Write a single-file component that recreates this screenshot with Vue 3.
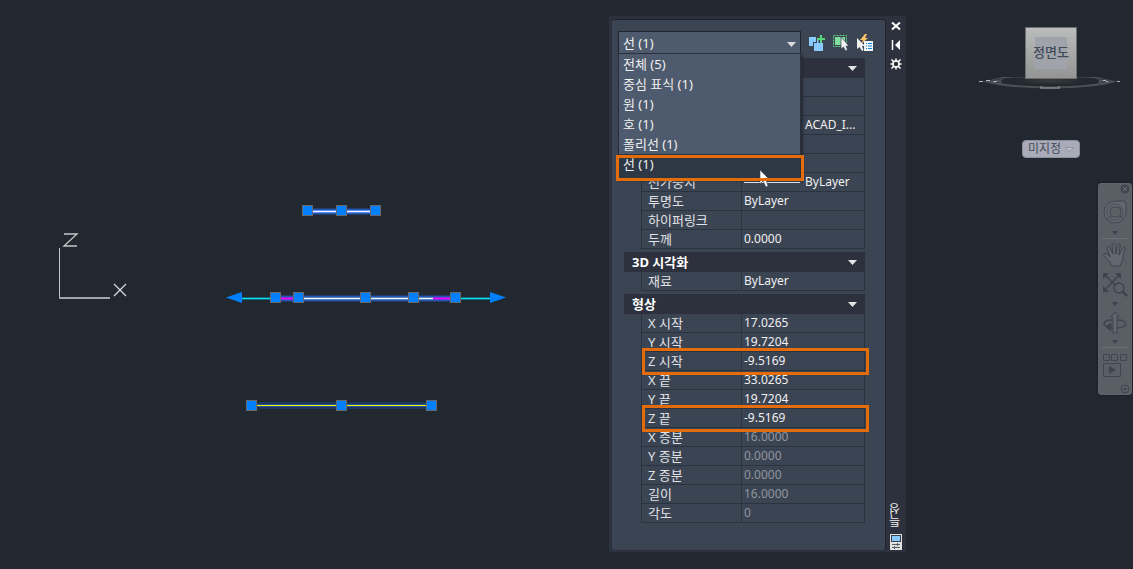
<script setup>
import { ref } from 'vue'

const options = ['전체 (5)', '중심 표식 (1)', '원 (1)', '호 (1)', '폴리선 (1)', '선 (1)']
const selected = ref('선 (1)')

const sections = [
  {
    title: '',
    rows: [
      { label: '', value: '' },
      { label: '', value: '' },
      { label: '', value: 'ACAD_I...', indent: true },
      { label: '', value: '' },
      { label: '', value: '' },
      { label: '선가중치', value: 'ByLayer', line: true },
      { label: '투명도', value: 'ByLayer' },
      { label: '하이퍼링크', value: '' },
      { label: '두께', value: '0.0000' }
    ]
  },
  { title: '3D 시각화', rows: [{ label: '재료', value: 'ByLayer' }] },
  {
    title: '형상',
    rows: [
      { label: 'X 시작', value: '17.0265' },
      { label: 'Y 시작', value: '19.7204' },
      { label: 'Z 시작', value: '-9.5169', marked: true },
      { label: 'X 끝', value: '33.0265' },
      { label: 'Y 끝', value: '19.7204' },
      { label: 'Z 끝', value: '-9.5169', marked: true },
      { label: 'X 증분', value: '16.0000', dim: true },
      { label: 'Y 증분', value: '0.0000', dim: true },
      { label: 'Z 증분', value: '0.0000', dim: true },
      { label: '길이', value: '16.0000', dim: true },
      { label: '각도', value: '0', dim: true }
    ]
  }
]

const grips = [
  [307, 210], [341, 210], [375, 210],
  [275, 297], [298, 297], [365, 297], [413, 297], [455, 297],
  [251, 405], [341, 405], [431, 405]
]
</script>

<template>
  <main class="workspace">
    <svg class="drawing" viewBox="0 0 609 569" preserveAspectRatio="xMinYMin meet" aria-label="도면">
      <g fill="none">
        <path d="M59.5 298V248" stroke="#c4c6c8" />
        <path d="M59 298H110" stroke="#a3a5a8" stroke-width="2" />
        <path d="M64 234H77L64 246H77" stroke="#c6c8ca" stroke-width="1.3" />
        <path d="M114 284L126 296M126 284L114 296" stroke="#d8dadc" stroke-width="1.3" />
      </g>
      <g fill="none">
        <path d="M307 211.500H375M276 298.500H456" stroke="#234f9e" stroke-width="7" opacity=".55" />
        <path d="M307 211.500H375M276 298.500H456" stroke="#2b6cf0" stroke-width="4" />
        <path d="M240 298.500H492" stroke="#1b4f7a" stroke-width="3" opacity=".5" />
        <path d="M240 298.500H276M456 298.500H492" stroke="#00e8ee" stroke-width="1.3" />
        <path d="M307 211.500H375M298 298.500H433" stroke="#f4f6ff" stroke-width="1.3" />
        <path d="M276 298.500H298M433 298.500H456" stroke="#f000ff" stroke-width="2" />
        <path d="M251 405.500H431" stroke="#20375d" stroke-width="7" />
        <path d="M251 405.500H431" stroke="#24549c" stroke-width="3" />
        <path d="M251 405.500H431" stroke="#f4f000" />
      </g>
      <path d="M226 297.500L242 292V303ZM506 297.500L490 292V303Z" fill="#0080ff" />
      <rect v-for="(g, i) in grips" :key="i" :x="g[0] - 4.500" :y="g[1] - 4.500" width="10" height="10" fill="#0080ff" stroke="#66686b" />
    </svg>

    <section class="palette" aria-label="특성">
      <div class="panel">
        <div class="picker">
          <div class="combo">
            <select v-model="selected" aria-label="객체 유형">
              <option v-for="o in options" :key="o">{{ o }}</option>
            </select>
            <svg class="combo-arrow" width="9" height="5" viewBox="0 0 9 5"><path d="M0 0H9L4.500 5Z" fill="#dcdcdc" /></svg>
            <ul class="menu" role="listbox" aria-label="객체 유형 목록">
              <li v-for="o in options" :key="o" role="option" :aria-selected="o === selected" :class="{ active: o === selected }" @click="selected = o">{{ o }}</li>
            </ul>
            <svg class="cursor" width="12" height="17" viewBox="0 0 12 17"><path d="M1 0V14L4 11L7 17L9 16L7 10H11Z" fill="#fff" stroke="#3b4453" stroke-width=".6" /></svg>
            <span class="choice-mark"></span>
          </div>
          <button class="tool" aria-label="추가 선택">
            <svg width="18" height="18" viewBox="0 0 18 18"><path d="M1 3H8V12H1Z" fill="#8acbff" /><path d="M5 8H15V17H5Z" fill="#3b4453" /><path d="M6 9H9V6H11V9H15V17H6Z" fill="#8acbff" /><path d="M8 4H17M12.500 0V9" stroke="#3b4453" stroke-width="4" /><path d="M9 5H17M13 1V9" stroke="#58d67c" stroke-width="2" /></svg>
          </button>
          <button class="tool" aria-label="객체 선택">
            <svg width="18" height="18" viewBox="0 0 18 18"><rect x="1.500" y="1.500" width="13" height="11" fill="none" stroke="#5fd885" stroke-dasharray="2 1" /><path d="M3 3H13V11H3Z" fill="#83dca0" /><path d="M9 3V15L11.500 13L13.500 17L15.500 16L14 12H17Z" fill="#f2f2f2" stroke="#3b4453" stroke-width=".7" /></svg>
          </button>
          <button class="tool" aria-label="신속 선택">
            <svg width="18" height="18" viewBox="0 0 18 18"><path d="M9 0L4 6H7L5 10L12 4H9L11 0Z" fill="#ffc565" /><path d="M1 4V15L3.500 13L6 17L7.500 16L6 12H9Z" fill="#f2f2f2" /><path d="M8 7H17V17H8Z" fill="#f2f4f7" /><path d="M10 9.500H11M12 9.500H16M10 12H11M12 12H16M10 14.500H11M12 14.500H16" stroke="#1687dc" stroke-width="1.200" /></svg>
          </button>
        </div>

        <div class="groups">
          <section v-for="(s, i) in sections" :key="i" class="group">
            <button class="group-head" :aria-label="s.title || '일반'">
              <span>{{ s.title }}</span>
              <svg width="9" height="5" viewBox="0 0 9 5"><path d="M0 0H9L4.500 5Z" fill="#e4e4e4" /></svg>
            </button>
            <table>
              <tbody>
                <tr v-for="(r, k) in s.rows" :key="k" :class="{ dim: r.dim }">
                  <th scope="row">{{ r.label }}</th>
                  <td>
                    <div class="value" :class="{ indent: r.indent }"><i v-if="r.line" class="sample"></i>{{ r.value }}</div>
                    <span v-if="r.marked" class="mark"></span>
                  </td>
                </tr>
              </tbody>
            </table>
          </section>
        </div>
      </div>

      <div class="strip">
        <button aria-label="닫기"><svg width="12" height="12" viewBox="0 0 12 12"><path d="M2 2.500L10 9.500M10 2.500L2 9.500" stroke="#fff" stroke-width="2" /></svg></button>
        <button aria-label="자동 숨기기"><svg width="12" height="12" viewBox="0 0 12 12"><path d="M2.500 1V11" stroke="#fff" stroke-width="1.500" /><path d="M9 2V10L5 6Z" fill="#fff" /><path d="M9.500 1.500V10.500" stroke="#fff" /></svg></button>
        <button aria-label="설정"><svg width="12" height="12" viewBox="0 0 12 12"><circle cx="6" cy="6" r="3" fill="none" stroke="#fff" stroke-width="1.500" /><path d="M6 0.500V3M6 9V11.500M0.500 6H3M9 6H11.500M1.500 1.500L4 4M8 8L10.500 10.500M10.500 1.500L8 4M4 8L1.500 10.500" stroke="#fff" stroke-width="1.500" /></svg></button>
        <span class="strip-title">특성</span>
        <svg width="12" height="16" viewBox="0 0 12 16"><path d="M0 0H12V16H0Z" fill="#e2e2e2" /><rect x="1.500" y="1.500" width="9" height="6" fill="#86c9ff" stroke="#3a414c" /><path d="M2 10.500H10M2 13.500H10M7.500 9V12M4.500 12V15" stroke="#555b64" /></svg>
      </div>
    </section>

    <aside class="view">
      <svg class="cube" width="142" height="64" viewBox="0 0 142 64" role="img" aria-label="정면도">
        <defs>
          <linearGradient id="face" x1="0" y1="0" x2="0" y2="1"><stop offset="0" stop-color="#bbbcbc" /><stop offset="1" stop-color="#949494" /></linearGradient>
          <radialGradient id="shade"><stop offset="0" stop-color="#3b3d3f" /><stop offset="1" stop-color="#22282f" /></radialGradient>
        </defs>
        <path d="M4 54.500L24 50H118L138 54.500Q118 61 71 61.500Q24 61 4 54.500Z" fill="#4a5056" />
        <path d="M12 54Q20 51 36 50.500H106Q122 51 130 54Q112 59 71 59.500Q30 59 12 54Z" fill="#22282f" />
        <path d="M12 54L26 51.500Q18 54 26 57ZM130 54L116 51.500Q124 54 116 57Z" fill="#4a5056" />
        <ellipse cx="71" cy="54" rx="36" ry="4" fill="url(#shade)" />
        <path d="M0 54.500H4M7 53.500H11M14 54.500H18M124 53.500H127M127 54.500H129M138 54.500H141" stroke="#b2b3b4" />
        <path d="M62 59V61H80V59" fill="none" stroke="#858788" stroke-width="1.500" />
        <rect x="46.500" y="0.500" width="51" height="51" fill="url(#face)" stroke="#6d6e6f" />
        <path d="M56 10H88V42H56Z" fill="#a0a3a9" />
        <text x="72" y="30" text-anchor="middle" class="cube-text">정면도</text>
      </svg>
      <button class="ucs">미지정<svg width="9" height="5" viewBox="0 0 9 5"><path d="M.5.5H8.500L4.500 4.500Z" fill="#bfc0cb" stroke="#858896" stroke-width=".7" /></svg></button>

      <nav class="navbar" aria-label="탐색 막대">
        <button class="end" aria-label="막대 닫기"><svg width="10" height="10" viewBox="0 0 10 10"><circle cx="5" cy="5" r="4.500" fill="#41474f" /><path d="M3 3L7 7M7 3L3 7" stroke="#6c7178" /></svg></button>
        <button class="h34" aria-label="휠"><svg width="26" height="26" viewBox="0 0 26 26" fill="none" stroke="#41474f"><path d="M13 2H21Q24 2 24 5V13A11 11 0 1 1 13 2Z" fill="#62676e" /><circle cx="13" cy="13" r="8" stroke="#4a5058" /><rect x="8" y="8" width="11" height="10" rx="4" fill="#5b6067" /><path d="M9 17L5 21M18 17L22 20" /></svg></button>
        <button class="h8" aria-label="휠 옵션"><svg width="6" height="4" viewBox="0 0 6 4"><path d="M0 0H6L3 4Z" fill="#3c424a" /></svg></button>
        <hr />
        <button class="h30" aria-label="초점이동"><svg width="26" height="26" viewBox="0 0 26 26"><path d="M10 24C8 20 5 17 2 14C1 12 3 11 5 12L8 15L5 6C5 4 7 4 8 6L11 12L10 3C10 1 12 1 13 3L14 12L16 3C17 1 19 2 18 4L17 13L21 6C22 4 24 5 23 7L21 15C21 19 19 21 18 24Z" fill="#62676f" stroke="#3e444c" /></svg></button>
        <button class="h30" aria-label="줌"><svg width="26" height="26" viewBox="0 0 26 26" fill="none" stroke="#3e444c"><path d="M3 3L15 15M17 3L3 18" stroke-width="1.500" /><path d="M1 1H7L1 7ZM19 1V7L13 1ZM1 20V14L7 20Z" fill="#3e444c" stroke="none" /><circle cx="17" cy="16" r="5" fill="#5b6067" stroke-width="1.300" /><path d="M21 20L25 24" stroke-width="3" /></svg></button>
        <button class="h8" aria-label="줌 옵션"><svg width="6" height="4" viewBox="0 0 6 4"><path d="M0 0H6L3 4Z" fill="#3c424a" /></svg></button>
        <button class="h30" aria-label="궤도"><svg width="26" height="26" viewBox="0 0 26 26" fill="none" stroke="#3e444c"><path d="M10 10C4 10 2 12 2 14C2 16 7 18 13 18C20 18 24 16 24 14C24 12 21 10 16 10" stroke-width="1.300" /><path d="M13 2L17 7H15V23H11V7H9Z" fill="#62676f" /><path d="M4 17L9 13V21Z" fill="#3e444c" /></svg></button>
        <button class="h8" aria-label="궤도 옵션"><svg width="6" height="4" viewBox="0 0 6 4"><path d="M0 0H6L3 4Z" fill="#3c424a" /></svg></button>
        <hr />
        <button class="h34" aria-label="쇼모션"><svg width="26" height="26" viewBox="0 0 26 26" fill="none" stroke="#41474f"><path d="M1.500 1.500H7.500V7.500H1.500ZM9.500 1.500H15.500V7.500H9.500ZM18.500 1.500H24.500V7.500H18.500ZM1.500 10.500H18.500V23.500H1.500Z" /><path d="M7 13V21L14 17Z" fill="#3e444c" stroke="none" /></svg></button>
        <button class="end" aria-label="막대 옵션"><svg width="10" height="10" viewBox="0 0 10 10"><circle cx="5" cy="5" r="4" fill="none" stroke="#41474f" /><path d="M3 4H7L5 7Z" fill="#41474f" /></svg></button>
      </nav>
    </aside>
  </main>
</template>

<style>
body {
  background: #22282f;
}
</style>

<style scoped>
.workspace {
  display: grid;
  grid-template-columns: 1fr 297px 227px;
  align-items: start;
  min-height: 100vh;
  background: #22282f;
  color: #f0f0f0;
  font: 12px/18px "Noto Sans", "Noto Sans CJK KR", sans-serif;
}
.workspace * {
  box-sizing: border-box;
}
button {
  display: flex;
  align-items: center;
  justify-content: center;
  padding: 0;
  border: 0;
  background: none;
  color: inherit;
  font: inherit;
}
svg {
  display: block;
  flex: none;
}
.drawing {
  width: 100%;
}
.palette {
  display: flex;
  margin-top: 16px;
  padding: 3px 0 2px 3px;
  background: #2c313d;
}
.panel {
  flex: 1;
  padding: 11px 6px 27px;
  border-right: 1px solid #20252d;
  border-top: 1px solid #20252d;
  border-radius: 3px;
  background: #3b4453;
}
.picker {
  display: flex;
  align-items: center;
  gap: 6px;
}
.combo {
  position: relative;
  width: 183px;
  margin-right: 1px;
}
.combo select {
  display: block;
  width: 100%;
  height: 23px;
  padding: 0 20px 0 4px;
  appearance: none;
  border: 1px solid #20252e;
  border-radius: 0;
  background: #4e5a6d;
  color: #f2f2f2;
  font: 13px/20px "Noto Sans", "Noto Sans CJK KR", sans-serif;
}
.combo-arrow {
  position: absolute;
  top: 11px;
  right: 5px;
}
.menu {
  position: absolute;
  z-index: 1;
  top: 22px;
  left: 0;
  width: 100%;
  margin: 0;
  padding: 0;
  border: 1px solid #2a313c;
  background: #4e5a6d;
  box-shadow: 2px 2px 2px #252b35;
  list-style: none;
  font-size: 13px;
  line-height: 20px;
}
.menu li {
  padding-left: 4px;
}
.menu .active {
  height: 24px;
  background: #2e3744;
}
.cursor {
  position: absolute;
  z-index: 2;
  top: 139px;
  right: 30px;
}
.choice-mark {
  position: absolute;
  z-index: 3;
  top: 124px;
  left: -2px;
  right: -3px;
  height: 26px;
  border: 3px solid #e46c0a;
  pointer-events: none;
}
.tool {
  width: 18px;
  height: 18px;
}
.groups {
  display: flex;
  flex-direction: column;
  gap: 3px;
  margin: 4px 14px 0 6px;
}
.group-head {
  width: 100%;
  height: 20px;
  justify-content: space-between;
  padding: 0 8px;
  background: #2c313d;
  color: #fff;
  font-size: 13px;
  font-weight: 700;
}
table {
  width: calc(100% - 17px);
  margin-left: 17px;
  border-spacing: 0;
  table-layout: fixed;
  border-left: 1px solid #2c3340;
}
th,
td {
  height: 19px;
  padding: 0;
  border-right: 1px solid #2c3340;
  border-bottom: 1px solid #2c3340;
  line-height: 18px;
  white-space: nowrap;
}
th {
  width: 100px;
  padding-left: 6px;
  text-align: left;
  font-size: 13px;
  font-weight: 400;
  color: #e0e2e5;
}
td {
  position: relative;
  padding-left: 2px;
}
.value {
  display: flex;
  align-items: center;
  height: 18px;
}
.indent {
  padding-left: 61px;
}
.sample {
  width: 56px;
  height: 1px;
  margin-right: 5px;
  background: #f0f0f0;
}
.dim td {
  color: #90969f;
}
.mark {
  position: absolute;
  z-index: 1;
  inset: -4px -5px -5px -100px;
  border: 3px solid #e46c0a;
  pointer-events: none;
}
.strip {
  display: flex;
  flex-direction: column;
  align-items: center;
  gap: 7px;
  width: 20px;
  padding-top: 1px;
}
.strip-title {
  margin-top: auto;
  writing-mode: vertical-rl;
  transform: rotate(180deg);
  font-size: 12px;
  line-height: 14px;
}
.view {
  display: flex;
  flex-direction: column;
  align-items: flex-end;
  padding-top: 27px;
}
.cube {
  margin-right: 12px;
}
.cube-text {
  fill: #414a59;
  font: 500 13px "Noto Sans CJK KR", sans-serif;
}
.ucs {
  gap: 4px;
  width: 58px;
  height: 18px;
  margin: 49px 53px 0 0;
  border: 1px solid #8d8f9d;
  border-radius: 4px;
  background: #a9abb8;
  color: #454b57;
}
.navbar {
  width: 34px;
  margin: 25px 1px 0 0;
  border-radius: 4px;
  background: #5a5f65;
  box-shadow: inset 0 0 1px #858990, 0 0 2px #101418;
}
.navbar button {
  width: 100%;
}
.navbar .end {
  height: 12px;
  justify-content: flex-end;
  padding-right: 2px;
}
.navbar hr {
  height: 1px;
  margin: 1px 3px;
  border: 0;
  background: #6b7076;
}
.h34 {
  height: 34px;
}
.h30 {
  height: 30px;
}
.h8 {
  height: 8px;
}
</style>
